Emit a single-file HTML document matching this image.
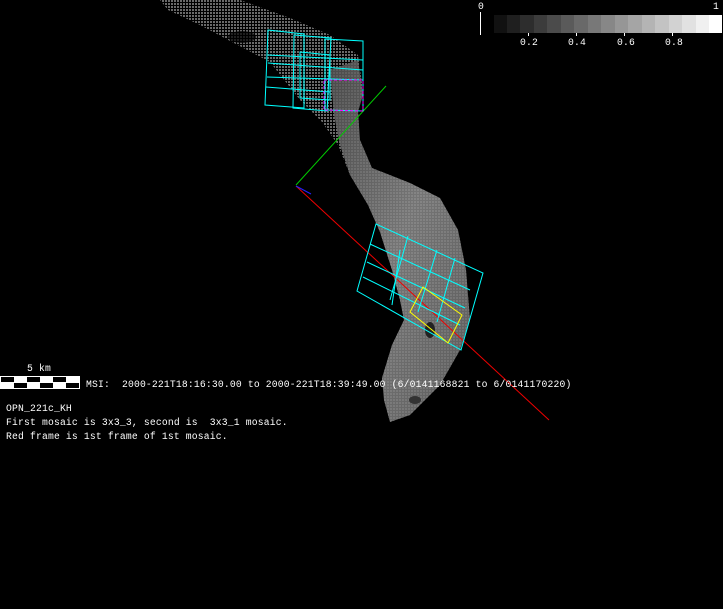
<!DOCTYPE html>
<html><head><style>
html,body{margin:0;padding:0;background:#000;}
body{width:723px;height:609px;position:relative;overflow:hidden;font-family:"Liberation Mono","DejaVu Sans Mono",monospace;}
.t{position:absolute;color:#fff;font-size:9.7px;letter-spacing:0.18px;white-space:pre;line-height:14px;}
</style></head><body>
<svg width="723" height="609" style="position:absolute;left:0;top:0">
<defs>
<linearGradient id="g1" x1="0" y1="0" x2="1" y2="1">
<stop offset="0" stop-color="#555"/><stop offset="0.5" stop-color="#8a8a8a"/><stop offset="1" stop-color="#6a6a6a"/></linearGradient>
<pattern id="dots" width="3" height="3" patternUnits="userSpaceOnUse"><rect width="2" height="2" fill="#6a6a6a"/></pattern>
</defs>
<path d="M160,0 L240,0 L290,18 L330,35 L358,55 L363,90 L358,110 L360,140 L372,168 L410,183 L440,198 L458,230 L466,270 L470,320 L460,350 L440,385 L410,415 L390,422 L384,400 L382,378 L392,345 L404,320 L400,300 L392,270 L380,232 L368,205 L350,175 L338,145 L322,122 L300,100 L270,62 L232,42 L200,25 L168,10 Z" fill="url(#dots)"/>
<path d="M330,70 L358,60 L363,95 L358,112 L360,140 L372,168 L410,183 L440,198 L458,230 L466,270 L470,320 L460,350 L440,385 L410,415 L390,422 L384,400 L382,378 L392,345 L404,320 L400,300 L392,270 L380,232 L368,205 L350,175 L340,145 L334,115 Z" fill="url(#g1)" opacity="0.85"/>
<ellipse cx="242" cy="37" rx="14" ry="6" fill="#000" opacity="0.7"/>
<ellipse cx="205" cy="40" rx="8" ry="4" fill="#000" opacity="0.6"/>
<ellipse cx="430" cy="330" rx="5" ry="8" fill="#222"/>
<ellipse cx="415" cy="400" rx="6" ry="4" fill="#333"/>
<line x1="296" y1="185" x2="386" y2="86" stroke="#0c0" stroke-width="1"/>
<line x1="296" y1="186" x2="549" y2="420" stroke="#e00" stroke-width="1"/>
<line x1="296" y1="186" x2="311" y2="194" stroke="#22f" stroke-width="1"/>
<g fill="none" stroke="#0ff" stroke-width="1">
<path d="M268,30 L304,34 L304,108 L265,105 Z"/>
<path d="M294,35 L331,38 L327,111 L293,108 Z"/>
<path d="M325,39 L363,41 L363,111 L325,110 Z"/>
<path d="M268,55 L363,60 M268,63 L363,70 M267,77 L363,80 M266,87 L330,92"/>
<path d="M300,52 L330,55 L330,100 L300,98 Z"/>
<path d="M376,224 L483,273 L461,350 L357,291 Z"/>
<path d="M370,244 L470,290 M367,262 L465,308 M363,277 L460,325"/>
<path d="M408,236 L390,300 M437,250 L418,312 M455,258 L437,322"/>
<path d="M400,250 L392,305"/>
</g>
<path d="M324,80 L363,80 L363,111 L324,110 Z" fill="none" stroke="#f0f" stroke-dasharray="3,2"/>
<path d="M423,287 L462,315 L448,343 L410,312 Z" fill="none" stroke="#ff0" stroke-width="1"/>
<g>
<rect x="494" y="15" width="14" height="18" fill="#111"/><rect x="507" y="15" width="14" height="18" fill="#1f1f1f"/><rect x="520" y="15" width="14" height="18" fill="#2d2d2d"/><rect x="534" y="15" width="14" height="18" fill="#3c3c3c"/><rect x="547" y="15" width="14" height="18" fill="#4b4b4b"/><rect x="561" y="15" width="14" height="18" fill="#5a5a5a"/><rect x="574" y="15" width="14" height="18" fill="#696969"/><rect x="588" y="15" width="14" height="18" fill="#787878"/><rect x="601" y="15" width="14" height="18" fill="#878787"/><rect x="615" y="15" width="14" height="18" fill="#969696"/><rect x="628" y="15" width="14" height="18" fill="#a5a5a5"/><rect x="642" y="15" width="14" height="18" fill="#b4b4b4"/><rect x="655" y="15" width="14" height="18" fill="#c3c3c3"/><rect x="669" y="15" width="14" height="18" fill="#d2d2d2"/><rect x="682" y="15" width="14" height="18" fill="#e1e1e1"/><rect x="696" y="15" width="14" height="18" fill="#f0f0f0"/><rect x="709" y="15" width="13" height="18" fill="#fff"/>
</g>
<line x1="480.5" y1="12" x2="480.5" y2="35" stroke="#fff"/>
<line x1="528.5" y1="33" x2="528.5" y2="36" stroke="#fff"/>
<line x1="576.5" y1="33" x2="576.5" y2="36" stroke="#fff"/>
<line x1="624.5" y1="33" x2="624.5" y2="36" stroke="#fff"/>
<line x1="672.5" y1="33" x2="672.5" y2="36" stroke="#fff"/>
<rect x="0" y="376" width="80" height="13" fill="#fff"/>
<g fill="#000">
<rect x="1" y="377" width="13" height="5"/><rect x="27" y="377" width="13" height="5"/><rect x="53" y="377" width="13" height="5"/>
<rect x="14" y="383" width="13" height="5"/><rect x="40" y="383" width="13" height="5"/><rect x="66" y="383" width="13" height="5"/>
</g>
</svg>
<div class="t" style="left:478px;top:0px">0</div>
<div class="t" style="left:713px;top:0px">1</div>
<div class="t" style="left:520px;top:36px">0.2</div>
<div class="t" style="left:568px;top:36px">0.4</div>
<div class="t" style="left:617px;top:36px">0.6</div>
<div class="t" style="left:665px;top:36px">0.8</div>
<div class="t" style="left:27px;top:362px">5 km</div>
<div class="t" style="left:86px;top:378px">MSI:  2000-221T18:16:30.00 to 2000-221T18:39:49.00 (6/0141168821 to 6/0141170220)</div>
<div class="t" style="left:6px;top:402px">OPN_221c_KH
First mosaic is 3x3_3, second is  3x3_1 mosaic.
Red frame is 1st frame of 1st mosaic.</div>
</body></html>
